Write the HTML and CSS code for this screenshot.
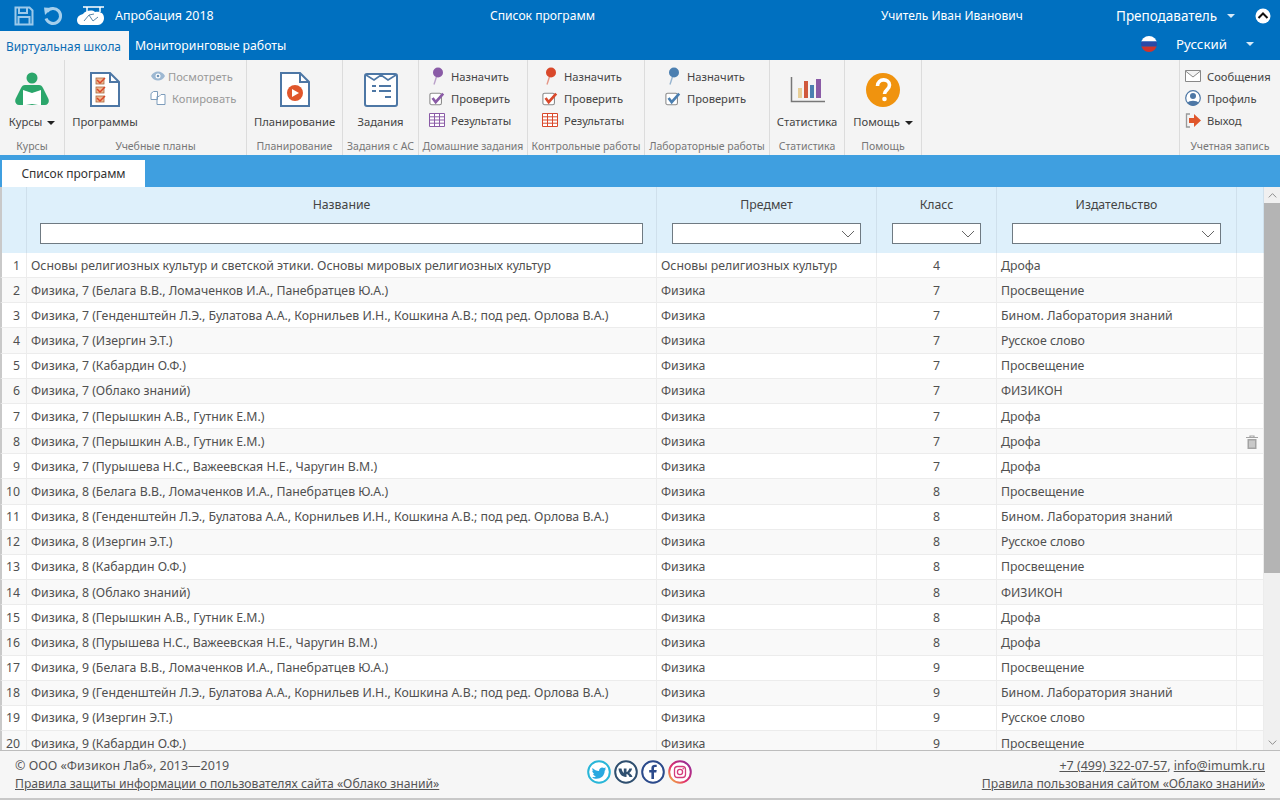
FILE: index.html
```html
<!DOCTYPE html>
<html lang="ru">
<head>
<meta charset="utf-8">
<title>Список программ</title>
<link rel="stylesheet" href="styles.css">
</head>
<body>
<svg class="defs" width="0" height="0">
  <symbol id="pin" viewBox="0 0 16 18"><path d="M8 8 5 17.500" stroke="currentColor" stroke-opacity=".55" stroke-width="1.400" fill="none"/><circle cx="9" cy="5.500" r="5" fill="currentColor"/></symbol>
  <symbol id="chk" viewBox="0 0 18 16"><rect x="1" y="2" width="13" height="13" rx="2" fill="#fff" stroke="#8a8a8a" stroke-width="1.200"/><path d="M4 7.500 7.500 12 16 2.500" fill="none" stroke="currentColor" stroke-width="3"/></symbol>
  <symbol id="grd" viewBox="0 0 16 14"><path d="M.5.500h15v13H.5zM.5 3.800h15M.5 7h15M.5 10.200h15M5.500.500v13M10.500.500v13" fill="#fff" stroke="currentColor"/></symbol>
  <symbol id="caret" viewBox="0 0 8 4"><path d="M0 0h8L4 4z" fill="currentColor"/></symbol>
  <symbol id="chev" viewBox="0 0 14 8"><path d="M1 1l6 6 6-6" fill="none" stroke="currentColor"/></symbol>
</svg>
<div class="page">
  <header class="top">
    <div class="top-row1">
      <div class="qa">
        <svg class="qa-ico" width="20" height="20" viewBox="0 0 20 20"><path d="M1.500 1.500h14l3 3v14h-17z" fill="none" stroke="#9cc9ea" stroke-width="2"/><path d="M5 2v5h8V2M4.500 18v-7h11v7" fill="none" stroke="#9cc9ea" stroke-width="2"/></svg>
        <svg class="qa-ico qa-undo" width="20" height="20" viewBox="0 0 20 20"><path d="M4 5.500a7.500 7.500 0 1 1-1 7" fill="none" stroke="#a5cfec" stroke-width="3"/><path d="M1 1.500 9 2 2 9z" fill="#a5cfec"/></svg>
        <svg class="qa-logo" width="28" height="19" viewBox="0 0 28 19"><path d="M6 1h21M10 1v5M23 1v5" stroke="#fff" stroke-width="1.500"/><path d="M6 8c2-3 9-5 12-2 5-1 9 1 9 6 0 4-3 7-6 7H5c-3 0-5-2-5-5 0-3 2-5 6-6z" fill="#fff"/><path d="M7 15l5-6 4 6 5-4M12 9l5-1" stroke="#5b87a8" fill="none"/></svg>
        <span class="qa-title">Апробация 2018</span>
      </div>
      <div class="top-center">Список программ</div>
      <div class="top-user">Учитель Иван Иванович</div>
      <div class="top-role">Преподаватель</div>
      <svg class="top-caret" width="8" height="4"><use href="#caret"/></svg>
      <svg class="top-collapse" width="16" height="16" viewBox="0 0 16 16"><circle cx="8" cy="8" r="7.500" fill="#fff"/><path d="M3.500 10 8 5.500l4.500 4.500" fill="none" stroke="#111" stroke-width="2"/></svg>
    </div>
    <div class="top-row2">
      <div class="app-tab app-tab-on">Виртуальная школа</div>
      <div class="app-tab">Мониторинговые работы</div>
      <div class="lang-box">
        <svg class="flag" width="16" height="16" viewBox="0 0 16 16"><clipPath id="fc"><circle cx="8" cy="8" r="8"/></clipPath><g clip-path="url(#fc)"><rect width="16" height="5.500" fill="#fff"/><rect y="5.500" width="16" height="5" fill="#2a4aa8"/><rect y="10.500" width="16" height="5.500" fill="#d0342c"/></g></svg>
        <div class="lang">Русский</div>
        <svg class="lang-caret" width="8" height="4"><use href="#caret"/></svg>
      </div>
    </div>
  </header>

  <section class="ribbon">
    <div class="grp g-kurs">
      <div class="grp-body">
        <div class="big">
          <svg class="big-ico" width="34" height="36" viewBox="0 0 34 36"><circle cx="17" cy="6" r="5.500" fill="#2ba66b"/><path d="M10 13h14c2 0 3 1 4 3l5 10c2 4 0 7-3 7H4c-3 0-5-3-3-7l5-10c1-2 2-3 4-3z" fill="#2ba66b"/><path d="M8 18l9 3 9-3v15.500l-9-1.500-9 1.500z" fill="#fff"/></svg>
          <span class="big-lbl">Курсы <svg class="cr" width="8" height="4"><use href="#caret"/></svg></span>
        </div>
      </div>
      <div class="grp-lbl">Курсы</div>
    </div>
    <div class="grp g-plan">
      <div class="grp-body gb-row">
        <div class="big big-prog">
          <svg class="big-ico" width="32" height="36" viewBox="0 0 32 36"><path d="M2 1h19l9 9v24H2z" fill="#fff" stroke="#4d77a5" stroke-width="2"/><path d="M21 1v9h9" fill="none" stroke="#4d77a5" stroke-width="2"/><g fill="#f2b98f" stroke="#a8683f" stroke-width=".8"><rect x="7" y="6" width="8" height="6"/><rect x="7" y="15" width="8" height="6"/><rect x="7" y="24" width="8" height="6"/></g><path d="M8 8l3 3 5-5M8 17l3 3 5-5M8 26l3 3 5-5" fill="none" stroke="#d9482b" stroke-width="1.500"/></svg>
          <span class="big-lbl">Программы</span>
        </div>
        <div class="smalls smalls-dim">
          <div class="sm"><svg class="sm-ico sm-ico-eye" width="16" height="12" viewBox="0 0 16 12"><path d="M1 6c3-6 11-6 14 0-3 6-11 6-14 0z" fill="#9db8d2"/><circle cx="8" cy="6" r="2.500" fill="#fff"/><circle cx="8" cy="6" r="1.300" fill="#6f93b5"/></svg>Посмотреть</div>
          <div class="sm"><svg class="sm-ico" width="16" height="15" viewBox="0 0 16 15"><path d="M1 2.500 3.500.500h4v8h-6.500zM7 5.500h2l2-2h4v10H7z" fill="#fff" stroke="#7d9cbb"/></svg>Копировать</div>
        </div>
      </div>
      <div class="grp-lbl">Учебные планы</div>
    </div>
    <div class="grp g-plng">
      <div class="grp-body">
        <div class="big">
          <svg class="big-ico" width="32" height="36" viewBox="0 0 32 36"><path d="M2 1h19l9 9v24H2z" fill="#fff" stroke="#4d77a5" stroke-width="2"/><path d="M21 1v9h9" fill="none" stroke="#4d77a5" stroke-width="2"/><circle cx="16" cy="21" r="8" fill="#e0562b"/><path d="M13 17v8l7-4z" fill="#fff"/></svg>
          <span class="big-lbl">Планирование</span>
        </div>
      </div>
      <div class="grp-lbl">Планирование</div>
    </div>
    <div class="grp g-task">
      <div class="grp-body">
        <div class="big">
          <svg class="big-ico" width="34" height="34" viewBox="0 0 34 34"><rect x="1" y="1" width="32" height="32" rx="2" fill="#fff" stroke="#4d77a5" stroke-width="2"/><path d="M2 2l8 5 7-5 7 5 8-5" fill="none" stroke="#4d77a5" stroke-width="1.600"/><path d="M8 13h4M15 13h12M8 18h4M15 18h12M21 24h6" stroke="#4d77a5" stroke-width="2"/></svg>
          <span class="big-lbl">Задания</span>
        </div>
      </div>
      <div class="grp-lbl">Задания с АС</div>
    </div>
    <div class="grp g-home">
      <div class="grp-body gb-row">
        <div class="smalls purple">
          <div class="sm"><svg class="sm-ico" width="16" height="18"><use href="#pin"/></svg>Назначить</div>
          <div class="sm"><svg class="sm-ico" width="16" height="15"><use href="#chk"/></svg>Проверить</div>
          <div class="sm"><svg class="sm-ico" width="16" height="14"><use href="#grd"/></svg>Результаты</div>
        </div>
      </div>
      <div class="grp-lbl">Домашние задания</div>
    </div>
    <div class="grp g-ctrl">
      <div class="grp-body gb-row">
        <div class="smalls red">
          <div class="sm"><svg class="sm-ico" width="16" height="18"><use href="#pin"/></svg>Назначить</div>
          <div class="sm"><svg class="sm-ico" width="16" height="15"><use href="#chk"/></svg>Проверить</div>
          <div class="sm"><svg class="sm-ico" width="16" height="14"><use href="#grd"/></svg>Результаты</div>
        </div>
      </div>
      <div class="grp-lbl">Контрольные работы</div>
    </div>
    <div class="grp g-lab">
      <div class="grp-body gb-row">
        <div class="smalls blue">
          <div class="sm"><svg class="sm-ico" width="16" height="18"><use href="#pin"/></svg>Назначить</div>
          <div class="sm"><svg class="sm-ico" width="16" height="15"><use href="#chk"/></svg>Проверить</div>
        </div>
      </div>
      <div class="grp-lbl">Лабораторные работы</div>
    </div>
    <div class="grp g-stat">
      <div class="grp-body">
        <div class="big">
          <svg class="big-ico" width="36" height="36" viewBox="0 0 36 36"><path d="M2.500 5v24.500H36" fill="none" stroke="#777" stroke-width="1.500"/><rect x="9" y="16" width="4" height="10" fill="#e8cf97"/><rect x="15" y="9" width="4" height="17" fill="#d0593c"/><rect x="21" y="13" width="4" height="13" fill="#4b7fb0"/><rect x="27" y="7" width="5" height="19" fill="#8a5ba6"/></svg>
          <span class="big-lbl">Статистика</span>
        </div>
      </div>
      <div class="grp-lbl">Статистика</div>
    </div>
    <div class="grp g-help">
      <div class="grp-body">
        <div class="big">
          <svg class="big-ico" width="34" height="34" viewBox="0 0 34 34"><circle cx="17" cy="17" r="17" fill="#f0930e"/><path d="M11.500 13c0-8 12-8 12-1 0 5-5 4.500-5 9" fill="none" stroke="#fff" stroke-width="3.600"/><circle cx="18.500" cy="26" r="2.300" fill="#fff"/></svg>
          <span class="big-lbl">Помощь <svg class="cr" width="8" height="4"><use href="#caret"/></svg></span>
        </div>
      </div>
      <div class="grp-lbl">Помощь</div>
    </div>
    <div class="ribbon-gap"></div>
    <div class="grp g-acc">
      <div class="grp-body gb-row">
        <div class="smalls">
          <div class="sm"><svg class="sm-ico" width="16" height="12" viewBox="0 0 16 12"><path d="M.5.500h15v11H.5zM.5 1l7.500 6 7.500-6" fill="#fff" stroke="#888"/></svg>Сообщения</div>
          <div class="sm"><svg class="sm-ico" width="16" height="16" viewBox="0 0 16 16"><circle cx="8" cy="8" r="7.300" fill="#fff" stroke="#4d77a5" stroke-width="1.200"/><circle cx="8" cy="6" r="3" fill="#4d77a5"/><path d="M2.500 13c1-3 10-3 11 0-3 3.500-8 3.500-11 0z" fill="#4d77a5"/></svg>Профиль</div>
          <div class="sm"><svg class="sm-ico" width="16" height="15" viewBox="0 0 16 15"><path d="M5 1H1.500v13H5" fill="none" stroke="#999" stroke-width="1.300"/><path d="M4 5h5V1l7 6.500L9 14v-4H4z" fill="#e0562b"/></svg>Выход</div>
        </div>
      </div>
      <div class="grp-lbl">Учетная запись</div>
    </div>
  </section>

  <nav class="strip"><div class="doc-tab">Список программ</div></nav>

  <main class="main">
    <div class="grid-wrap">
      <table class="grid">
        <colgroup><col class="c-n"><col class="c-name"><col class="c-subj"><col class="c-cls"><col class="c-pub"><col class="c-act"></colgroup>
        <thead>
          <tr>
            <th></th>
            <th><div class="th-t">Название</div><div class="inp inp-name"></div></th>
            <th><div class="th-t">Предмет</div><div class="inp inp-subj"><svg width="14" height="8"><use href="#chev"/></svg></div></th>
            <th><div class="th-t">Класс</div><div class="inp inp-cls"><svg width="14" height="8"><use href="#chev"/></svg></div></th>
            <th><div class="th-t">Издательство</div><div class="inp inp-pub"><svg width="14" height="8"><use href="#chev"/></svg></div></th>
            <th></th>
          </tr>
        </thead>
        <tbody>
          <tr><td class="n">1</td><td>Основы религиозных культур и светской этики. Основы мировых религиозных культур</td><td>Основы религиозных культур</td><td class="cn">4</td><td>Дрофа</td><td></td></tr>
          <tr><td class="n">2</td><td>Физика, 7 (Белага В.В., Ломаченков И.А., Панебратцев Ю.А.)</td><td>Физика</td><td class="cn">7</td><td>Просвещение</td><td></td></tr>
          <tr><td class="n">3</td><td>Физика, 7 (Генденштейн Л.Э., Булатова А.А., Корнильев И.Н., Кошкина А.В.; под ред. Орлова В.А.)</td><td>Физика</td><td class="cn">7</td><td>Бином. Лаборатория знаний</td><td></td></tr>
          <tr><td class="n">4</td><td>Физика, 7 (Изергин Э.Т.)</td><td>Физика</td><td class="cn">7</td><td>Русское слово</td><td></td></tr>
          <tr><td class="n">5</td><td>Физика, 7 (Кабардин О.Ф.)</td><td>Физика</td><td class="cn">7</td><td>Просвещение</td><td></td></tr>
          <tr><td class="n">6</td><td>Физика, 7 (Облако знаний)</td><td>Физика</td><td class="cn">7</td><td>ФИЗИКОН</td><td></td></tr>
          <tr><td class="n">7</td><td>Физика, 7 (Перышкин А.В., Гутник Е.М.)</td><td>Физика</td><td class="cn">7</td><td>Дрофа</td><td></td></tr>
          <tr><td class="n">8</td><td>Физика, 7 (Перышкин А.В., Гутник Е.М.)</td><td>Физика</td><td class="cn">7</td><td>Дрофа</td><td class="cn"><svg class="trash" width="12" height="14" viewBox="0 0 12 14"><path d="M0 2.500h12M4 2.500V1h4v1.500" fill="none" stroke="#a3a3a3" stroke-width="1.200"/><path d="M1.500 4h9v10h-9z" fill="#a3a3a3"/><path d="M4 5.500v7M6 5.500v7M8 5.500v7" stroke="#eee"/></svg></td></tr>
          <tr><td class="n">9</td><td>Физика, 7 (Пурышева Н.С., Важеевская Н.Е., Чаругин В.М.)</td><td>Физика</td><td class="cn">7</td><td>Дрофа</td><td></td></tr>
          <tr><td class="n">10</td><td>Физика, 8 (Белага В.В., Ломаченков И.А., Панебратцев Ю.А.)</td><td>Физика</td><td class="cn">8</td><td>Просвещение</td><td></td></tr>
          <tr><td class="n">11</td><td>Физика, 8 (Генденштейн Л.Э., Булатова А.А., Корнильев И.Н., Кошкина А.В.; под ред. Орлова В.А.)</td><td>Физика</td><td class="cn">8</td><td>Бином. Лаборатория знаний</td><td></td></tr>
          <tr><td class="n">12</td><td>Физика, 8 (Изергин Э.Т.)</td><td>Физика</td><td class="cn">8</td><td>Русское слово</td><td></td></tr>
          <tr><td class="n">13</td><td>Физика, 8 (Кабардин О.Ф.)</td><td>Физика</td><td class="cn">8</td><td>Просвещение</td><td></td></tr>
          <tr><td class="n">14</td><td>Физика, 8 (Облако знаний)</td><td>Физика</td><td class="cn">8</td><td>ФИЗИКОН</td><td></td></tr>
          <tr><td class="n">15</td><td>Физика, 8 (Перышкин А.В., Гутник Е.М.)</td><td>Физика</td><td class="cn">8</td><td>Дрофа</td><td></td></tr>
          <tr><td class="n">16</td><td>Физика, 8 (Пурышева Н.С., Важеевская Н.Е., Чаругин В.М.)</td><td>Физика</td><td class="cn">8</td><td>Дрофа</td><td></td></tr>
          <tr><td class="n">17</td><td>Физика, 9 (Белага В.В., Ломаченков И.А., Панебратцев Ю.А.)</td><td>Физика</td><td class="cn">9</td><td>Просвещение</td><td></td></tr>
          <tr><td class="n">18</td><td>Физика, 9 (Генденштейн Л.Э., Булатова А.А., Корнильев И.Н., Кошкина А.В.; под ред. Орлова В.А.)</td><td>Физика</td><td class="cn">9</td><td>Бином. Лаборатория знаний</td><td></td></tr>
          <tr><td class="n">19</td><td>Физика, 9 (Изергин Э.Т.)</td><td>Физика</td><td class="cn">9</td><td>Русское слово</td><td></td></tr>
          <tr><td class="n">20</td><td>Физика, 9 (Кабардин О.Ф.)</td><td>Физика</td><td class="cn">9</td><td>Просвещение</td><td></td></tr>
        </tbody>
      </table>
    </div>
    <div class="sbar">
      <div class="sbar-btn"><svg width="9" height="5" viewBox="0 0 14 8"><path d="M1 7l6-6 6 6" fill="none" stroke="#888" stroke-width="1.500"/></svg></div>
      <div class="sbar-thumb"></div>
      <div class="sbar-rest"></div>
      <div class="sbar-btn"><svg width="9" height="5" viewBox="0 0 14 8"><path d="M1 1l6 6 6-6" fill="none" stroke="#888" stroke-width="1.500"/></svg></div>
    </div>
  </main>

  <footer class="foot">
    <div class="foot-l">
      <div class="copy">© ООО «Физикон Лаб», 2013—2019</div>
      <div><a class="lnk">Правила защиты информации о пользователях сайта «Облако знаний»</a></div>
    </div>
    <div class="foot-c">
      <svg width="24" height="24" viewBox="0 0 24 24"><circle cx="12" cy="12" r="10.800" fill="#fff" stroke="#29b6d8" stroke-width="2"/><path d="M5.500 8c2 2 4 3 6.500 3 0-3 3-4.500 5-3l2-.5-1.200 2 1.200-.2-1.300 1.400c0 5-4 8-8 8-2 0-3.500-.5-4.700-1.300 1.500 0 3-.4 4-1.200-1.500 0-2.500-1-3-2.200h1.300C6 13 5.200 11.800 5.200 10.500l1.300.4C5.500 10.200 5 9 5.500 8z" fill="#29a9e0"/></svg>
      <svg width="24" height="24" viewBox="0 0 24 24"><circle cx="12" cy="12" r="10.800" fill="#fff" stroke="#2f4f6f" stroke-width="2"/><path d="M4.500 8.500h3c.4 2 1.400 4 2.300 4.400V8.500h2.700v3.600c1.200-.3 2.300-1.900 2.800-3.600h2.800c-.4 2-1.700 3.600-2.900 4.500 1.300.7 2.600 2 3.300 3.900h-3c-.6-1.600-1.800-2.700-3-2.900v2.900h-.6c-4 0-6.800-3-7.400-8.400z" fill="#2f4f6f"/></svg>
      <svg width="24" height="24" viewBox="0 0 24 24"><circle cx="12" cy="12" r="10.800" fill="#fff" stroke="#2b4a8b" stroke-width="2"/><path d="M13 19v-6.500h2.300l.4-2.600H13V8.400c0-.8.300-1.300 1.400-1.300h1.300V4.800c-2.800-.4-5.300 0-5.300 3.300v1.800H8.200v2.600h2.200V19z" fill="#2b4a8b"/></svg>
      <svg width="24" height="24" viewBox="0 0 24 24"><defs><linearGradient id="ig" x1="0" y1="1" x2="1" y2="0"><stop offset="0" stop-color="#f5c33b"/><stop offset=".4" stop-color="#e1306c"/><stop offset="1" stop-color="#8a2a9c"/></linearGradient></defs><circle cx="12" cy="12" r="10.800" fill="#fff" stroke="url(#ig)" stroke-width="2"/><rect x="6.500" y="6.500" width="11" height="11" rx="3" fill="none" stroke="#d43c7c" stroke-width="1.300"/><circle cx="12" cy="12" r="2.600" fill="none" stroke="#d43c7c" stroke-width="1.300"/><circle cx="15.200" cy="8.800" r=".8" fill="#d43c7c"/></svg>
    </div>
    <div class="foot-r">
      <div><a class="lnk lnk-ph">+7 (499) 322-07-57</a>, <a class="lnk lnk-ph">info@imumk.ru</a></div>
      <div><a class="lnk">Правила пользования сайтом «Облако знаний»</a></div>
    </div>
  </footer>
</div>
</body>
</html>
```

FILE: styles.css
```css
* { box-sizing: border-box; }
html, body { margin: 0; padding: 0; height: 100%; }
body { font-family: "Noto Sans", "Open Sans", sans-serif; font-size: 12px; color: #444; overflow: hidden; background: #fff; }
.defs { display: block; height: 0; }
.page { width: 1280px; height: 800px; display: flex; flex-direction: column; }

/* top bar */
.top { background: #0070c0; color: #fff; height: 60px; flex: none; }
.top-row1 { height: 31px; display: flex; align-items: center; font-size: 12px; }
.qa { width: 490px; display: flex; align-items: center; padding-left: 14px; }
.qa-undo { margin-left: 9px; }
.qa-logo { margin-left: 14px; }
.qa-title { margin-left: 10px; font-size: 12.4px; }
.top-center { width: 391px; font-size: 12.1px; }
.top-user { width: 235px; }
.top-role { font-size: 13.5px; width: 111px; }
.top-caret { color: #d6eaf8; display: block; }
.top-collapse { margin-left: 20px; }
.top-row2 { height: 29px; display: flex; align-items: center; font-size: 12.25px; }
.app-tab { height: 29px; padding: 0 6px; display: flex; align-items: center; white-space: nowrap; }
.app-tab-on { background: #f4f4f4; color: #0a6cb4; width: 129px; padding-right: 0; font-size: 11.9px; }
.lang-box { margin-left: auto; padding: 0 26px 3px 0; display: flex; align-items: center; }
.lang { font-size: 13.3px; margin-left: 19px; width: 70px; }
.lang-caret { color: #d6eaf8; }

/* ribbon */
.ribbon { height: 95px; flex: none; background: #f4f4f4; display: flex; }
.grp { display: flex; flex-direction: column; border-right: 1px solid #dcdcdc; flex: none; }
.grp-body { flex: 1; display: flex; justify-content: center; }
.gb-row { justify-content: flex-start; }
.grp-lbl { height: 21px; flex: none; text-align: center; font-size: 10.5px; color: #777; line-height: 24px; white-space: nowrap; }
.g-kurs { width: 65px; }
.g-plan { width: 182px; }
.g-plng { width: 96px; }
.g-task { width: 76px; }
.g-home { width: 109px; }
.g-ctrl { width: 117px; }
.g-lab { width: 125px; }
.g-stat { width: 75px; }
.g-help { width: 77px; }
.ribbon-gap { flex: 1; }
.g-acc { width: 101px; border-right: 0; border-left: 1px solid #dcdcdc; }
.g-home .smalls { margin-left: 10px; }
.g-ctrl .smalls { margin-left: 14px; }
.g-lab .smalls { margin-left: 20px; }
.g-acc .smalls { margin-left: 5px; }

.big { display: flex; flex-direction: column; align-items: center; padding-top: 12px; white-space: nowrap; font-size: 11.25px; }
.big-prog { margin-left: 7px; width: 66px; }
.big-ico { height: 36px; display: block; flex: none; }
.big-lbl { margin-top: 5px; line-height: 18px; }
.cr { color: #222; margin-left: 2px; vertical-align: middle; }

.smalls { padding-top: 5px; font-size: 11.2px; white-space: nowrap; }
.smalls-dim { color: #999; margin-left: 12px; }
.sm { height: 22px; display: flex; align-items: center; }
.sm-ico { width: 16px; margin-right: 6px; flex: none; }
.sm-ico-eye { margin-right: 2px; }
.purple svg { color: #8a5ba6; }
.red svg { color: #d9482b; }
.blue svg { color: #4b7fb0; }

/* strip */
.strip { height: 32px; flex: none; background: #3f9fe0; padding: 5px 0 0 2px; }
.doc-tab { width: 143px; height: 27px; background: #fff; color: #333; text-align: center; line-height: 27px; font-size: 12px; }

/* grid */
.main { flex: 1; min-height: 0; display: flex; }
.grid-wrap { flex: 1; overflow: hidden; }
.grid { width: 1264px; table-layout: fixed; border-collapse: separate; border-spacing: 0; }
.c-n { width: 27px; }
.c-name { width: 630px; }
.c-subj { width: 220px; }
.c-cls { width: 120px; }
.c-pub { width: 240px; }
.c-act { width: 27px; }
.grid th { background: #def0fb; border-right: 1px solid #cfe0ec; height: 66px; padding: 0; font-weight: 400; font-size: 12.3px; color: #444; vertical-align: top; }
.grid th:first-child { border-left: 2px solid #c9c9c9; }
.th-t { height: 36px; line-height: 35px; }
.inp { height: 21px; background: #fff; border: 1px solid #6f7a82; display: flex; align-items: center; justify-content: flex-end; padding-right: 5px; color: #666; }
.inp-name { margin: 0 13px; }
.inp-subj { margin: 0 15px; }
.inp-cls { margin: 0 15px; }
.inp-pub { margin: 0 15px; }
.grid td { height: 25.16px; padding: 1px 4px 0; font-size: 12.3px; line-height: 16px; color: #505050; border-right: 1px solid #ececec; border-bottom: 1px solid #ececec; white-space: nowrap; overflow: hidden; }
.grid tbody tr:nth-child(even) td { background: #f9f9f9; }
.grid td.n { text-align: right; padding: 1px 6px 0 0; border-left: 2px solid #c9c9c9; }
.grid td.cn { text-align: center; }
.trash { display: block; margin: 0 0 0 5px; }

/* scrollbar */
.sbar { width: 16px; flex: none; display: flex; flex-direction: column; background: #f0f0f0; }
.sbar-btn { height: 16px; flex: none; display: flex; align-items: center; justify-content: center; }
.sbar-thumb { height: 370px; flex: none; background: #b4b4b4; }
.sbar-rest { flex: 1; }

/* footer */
.foot { height: 50px; flex: none; background: #f6f6f6; border-top: 1px solid #bdbdbd; border-bottom: 2px solid #c8c8c8; display: grid; grid-template-columns: 1fr auto 1fr; padding: 6px 15px 0; font-size: 12.2px; line-height: 18px; color: #555; }
.copy { font-size: 12.5px; }
.foot-c { display: flex; gap: 3px; padding-top: 3px; margin-right: 1px; }
.foot-r { text-align: right; }
.lnk { text-decoration: underline; color: #555; }
.lnk-ph { font-size: 12.5px; }
```
